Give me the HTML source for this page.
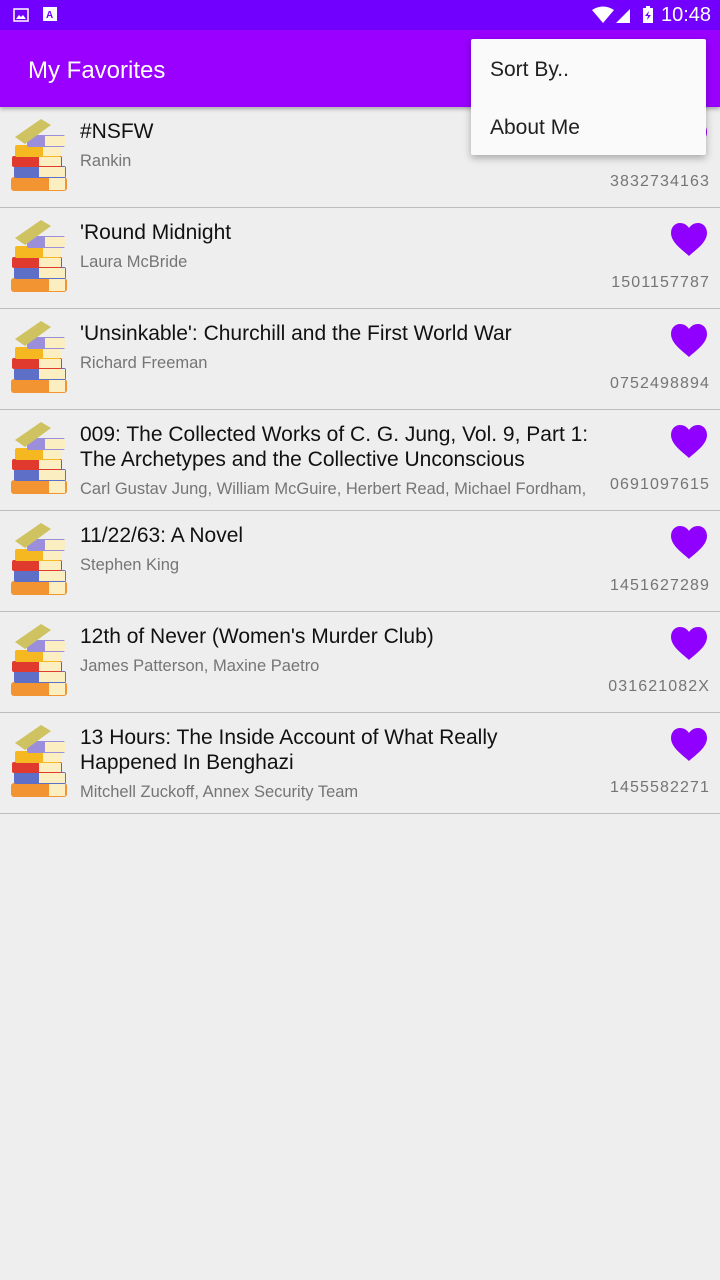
<!DOCTYPE html>
<html><head><meta charset="utf-8"><style>
*{margin:0;padding:0;box-sizing:border-box}
body{width:720px;height:1280px;background:#eeeeee;font-family:"Liberation Sans",sans-serif;position:relative;overflow:hidden}
.sb{position:absolute;top:0;left:0;width:720px;height:30px;background:#7200ff;color:#fff}
.ab{position:absolute;top:30px;left:0;width:720px;height:77px;background:#9900ff;box-shadow:0 2px 4px rgba(0,0,0,.3)}
.ab h1{position:absolute;left:28px;top:27px;font-size:24px;font-weight:normal;color:#fff}
.row{position:absolute;left:0;width:720px;height:101px;border-bottom:1px solid #bdbdbd}
.row svg.bk{position:absolute;left:9px;top:12px}
.t{position:absolute;left:80px;top:12px;font-size:21px;line-height:25px;color:#111;white-space:nowrap}
.a{position:absolute;left:80px;font-size:16.5px;color:#757575;white-space:nowrap}
.i{position:absolute;right:10px;top:66px;font-size:16px;color:#757575;letter-spacing:1.1px}
.h{position:absolute;left:670px;top:14px}
.menu{position:absolute;left:471px;top:39px;width:235px;height:116px;background:#fafafa;border-radius:2px;box-shadow:0 3px 8px rgba(0,0,0,.3)}
.menu div{position:absolute;left:19px;font-size:21px;color:#212121}
</style></head><body>
<svg width="0" height="0" style="position:absolute"><defs>
<g id="book">
<rect x="2" y="58" width="56" height="14" rx="3" fill="#f39433"/><rect x="40" y="59" width="16" height="12" fill="#fbeec0"/>
<rect x="5" y="47" width="52" height="12" rx="2" fill="#5d6fc7"/><rect x="30" y="48" width="26" height="10" fill="#fbeec0"/>
<rect x="3" y="37" width="50" height="11" rx="2" fill="#e0392e"/><rect x="30" y="38" width="22" height="9" fill="#fbeec0"/>
<rect x="6" y="26" width="46" height="12" rx="2" fill="#f5b820"/><rect x="34" y="27" width="18" height="10" fill="#fbeec0"/>
<rect x="18" y="16" width="38" height="12" rx="2" fill="#9b8fdc"/><rect x="36" y="17" width="20" height="10" fill="#fbeec0"/>
<polygon points="6,18 32,0 42,6 16,25" fill="#cfc261"/>
</g>
<path id="heart" d="M19 34 C14 29 1 21 1 11 C1 5 5 1 10 1 C14 1 17 3 19 6 C21 3 24 1 28 1 C33 1 37 5 37 11 C37 21 24 29 19 34Z" fill="#9000ff"/>
</defs></svg>
<div class="sb">
<svg style="position:absolute;left:13px;top:8px" width="16" height="14"><rect x="1" y="1" width="14" height="12" fill="none" stroke="#fff" stroke-width="1.5"/><path d="M3 11 L6 7 L8 9 L10 7 L13 11Z" fill="#fff"/></svg>
<svg style="position:absolute;left:43px;top:7px" width="14" height="16"><rect x="0" y="0" width="14" height="14" fill="#fff"/><text x="3" y="11" font-size="10" font-family="Liberation Sans" font-weight="bold" fill="#7200ff">A</text></svg>
<svg style="position:absolute;left:592px;top:6px" width="70" height="18"><path d="M0 4 Q11 -3 22 4 L11 17Z" fill="#fff"/><path d="M24 17 L38 3 L38 17Z" fill="#fff"/><rect x="51" y="2" width="10" height="15" fill="#fff"/><rect x="54" y="0" width="4" height="3" fill="#fff"/><path d="M57 5 L53 10 L56 10 L55 14 L59 9 L56 9Z" fill="#7200ff"/></svg>
<div style="position:absolute;left:661px;top:4px;font-size:20px">10:48</div>
</div>
<div class="ab"><h1>My Favorites</h1></div>

<div class="row" style="top:107px"><svg class="bk" width="62" height="72"><use href="#book"/></svg><div class="t">#NSFW</div><div class="a" style="top:45px">Rankin</div><svg class="h" width="38" height="36"><use href="#heart"/></svg><div class="i">3832734163</div></div>
<div class="row" style="top:208px"><svg class="bk" width="62" height="72"><use href="#book"/></svg><div class="t">'Round Midnight</div><div class="a" style="top:45px">Laura McBride</div><svg class="h" width="38" height="36"><use href="#heart"/></svg><div class="i">1501157787</div></div>
<div class="row" style="top:309px"><svg class="bk" width="62" height="72"><use href="#book"/></svg><div class="t">'Unsinkable': Churchill and the First World War</div><div class="a" style="top:45px">Richard Freeman</div><svg class="h" width="38" height="36"><use href="#heart"/></svg><div class="i">0752498894</div></div>
<div class="row" style="top:410px"><svg class="bk" width="62" height="72"><use href="#book"/></svg><div class="t">009: The Collected Works of C. G. Jung, Vol. 9, Part 1:<br>The Archetypes and the Collective Unconscious</div><div class="a" style="top:70px">Carl Gustav Jung, William McGuire, Herbert Read, Michael Fordham,</div><svg class="h" width="38" height="36"><use href="#heart"/></svg><div class="i">0691097615</div></div>
<div class="row" style="top:511px"><svg class="bk" width="62" height="72"><use href="#book"/></svg><div class="t">11/22/63: A Novel</div><div class="a" style="top:45px">Stephen King</div><svg class="h" width="38" height="36"><use href="#heart"/></svg><div class="i">1451627289</div></div>
<div class="row" style="top:612px"><svg class="bk" width="62" height="72"><use href="#book"/></svg><div class="t">12th of Never (Women's Murder Club)</div><div class="a" style="top:45px">James Patterson, Maxine Paetro</div><svg class="h" width="38" height="36"><use href="#heart"/></svg><div class="i">031621082X</div></div>
<div class="row" style="top:713px"><svg class="bk" width="62" height="72"><use href="#book"/></svg><div class="t">13 Hours: The Inside Account of What Really<br>Happened In Benghazi</div><div class="a" style="top:70px">Mitchell Zuckoff, Annex Security Team</div><svg class="h" width="38" height="36"><use href="#heart"/></svg><div class="i">1455582271</div></div>

<div class="menu"><div style="top:19px">Sort By..</div><div style="top:77px">About Me</div></div>
</body></html>
